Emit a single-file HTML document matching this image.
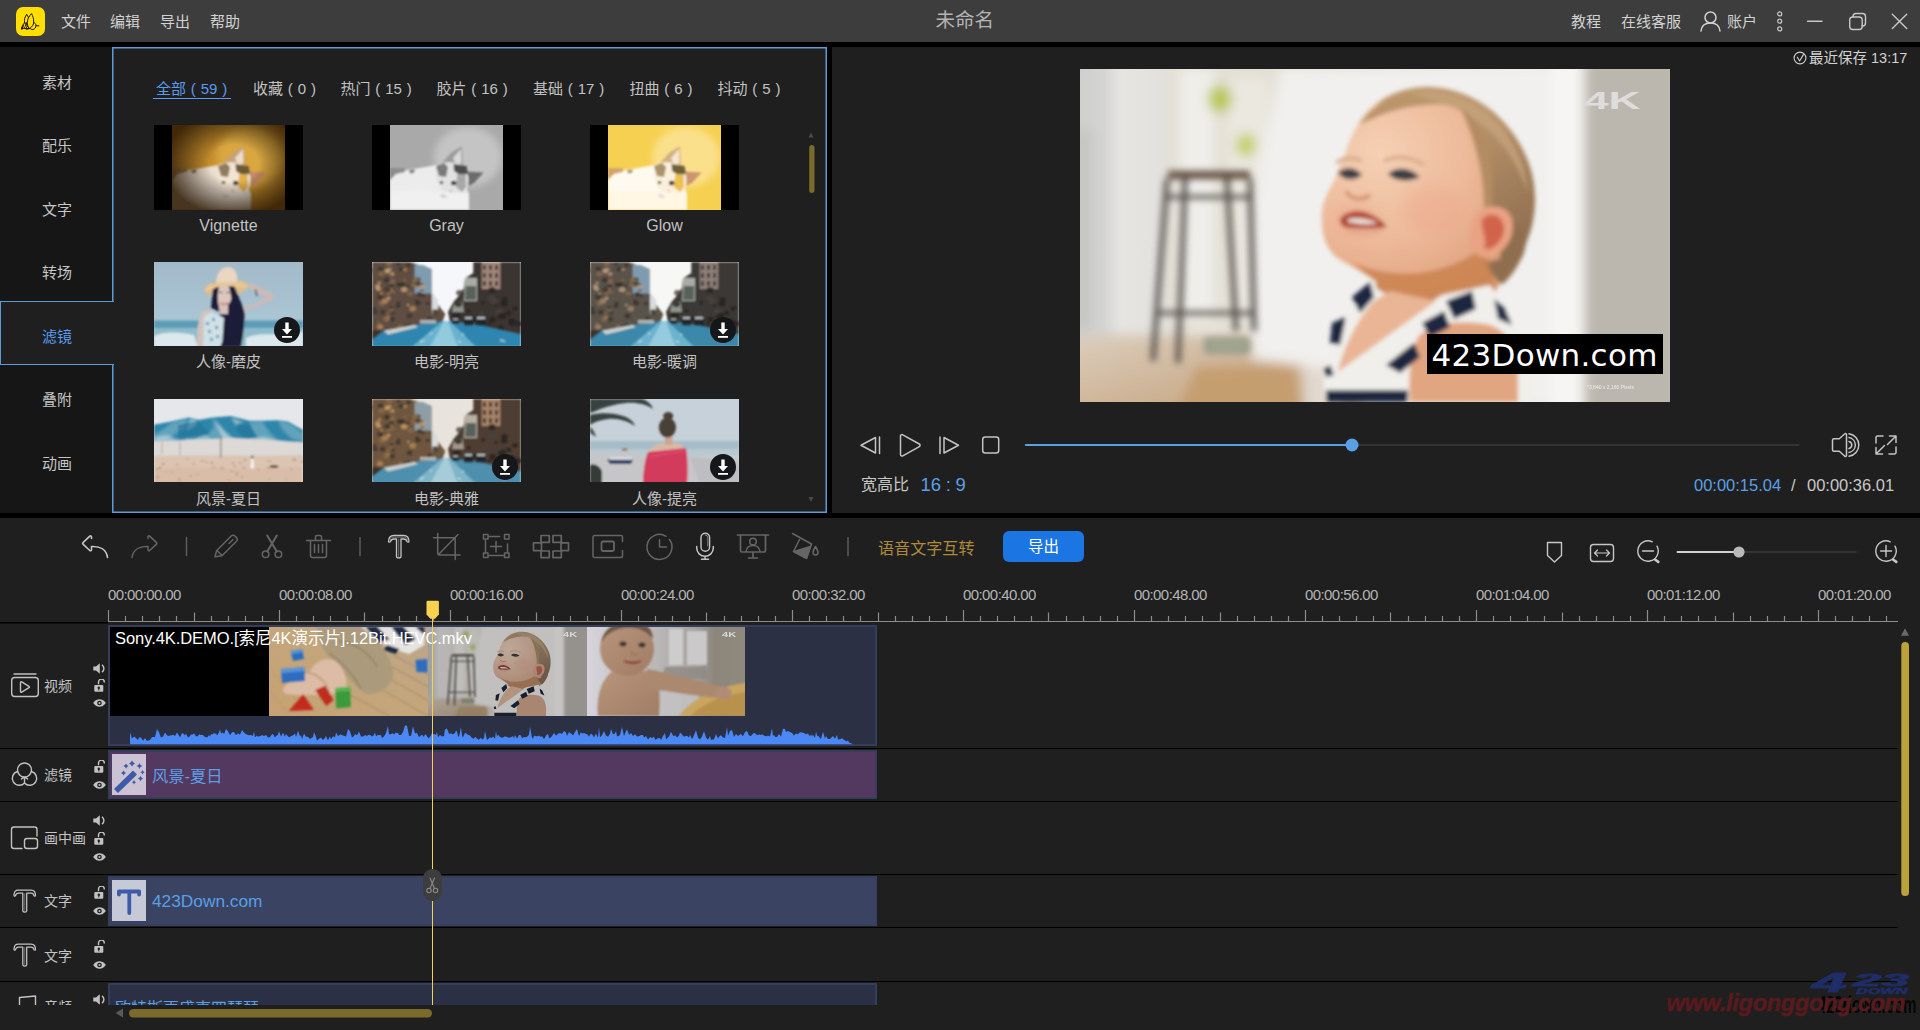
<!DOCTYPE html>
<html lang="zh-CN">
<head>
<meta charset="utf-8">
<title>未命名</title>
<style>
*{box-sizing:border-box;margin:0;padding:0}
html,body{width:1920px;height:1030px;overflow:hidden;background:#000}
body{font-family:"Liberation Sans","Noto Sans CJK SC",sans-serif;color:#c4c4c4;position:relative}
.abs{position:absolute}
.t{position:absolute;white-space:nowrap;line-height:1}
svg{position:absolute;overflow:visible}
#titlebar{position:absolute;left:0;top:0;width:1920px;height:42px;background:#3d3d3d}
#sidebar{position:absolute;left:0;top:47px;width:112px;height:466px;background:#161616}
#filters{position:absolute;left:112px;top:47px;width:715px;height:466px;background:#1f1f1f;box-shadow:inset 0 0 0 1.5px #5a9bd8}
#preview{position:absolute;left:832px;top:47px;width:1088px;height:466px;background:#1f1f1f}
#timeline{position:absolute;left:0;top:518px;width:1920px;height:512px;background:#1f1f1f;overflow:hidden}
.menu{font-size:15px;color:#d2d2d2;top:14px}
.side{font-size:15px;color:#c6c6c6;left:42px}
.tab{font-size:15px;color:#c2c2c2;top:81px;word-spacing:0.7px}
.thumb{position:absolute;width:149px;height:85px;overflow:hidden;background:#000}
.lbl{position:absolute;width:149px;text-align:center;font-size:15px;color:#c2c2c2;line-height:1;white-space:nowrap}
.dl{position:absolute;right:4px;bottom:4px;width:26px;height:26px;border-radius:50%;background:#16181b}
.rl{font-size:15px;letter-spacing:-0.58px;color:#b4b4b4;top:69px}
.hl{font-size:14px;color:#c4c4c4}
</style>
</head>
<body>
<div id="titlebar">
  <div class="abs" style="left:16px;top:7px;width:29px;height:29px;border-radius:7px;background:#ffde00"></div>
  <svg style="left:16px;top:7px" width="29" height="29" viewBox="0 0 29 29" fill="none" stroke="#1c1408" stroke-width="1" stroke-linecap="round" stroke-linejoin="round">
    <path d="M10.700 7.600C8.800 9.500 8 12.500 8.600 15.800M10.700 7.600C11.500 8.300 12.100 9.400 12.500 10.600M10.300 15.600C10.300 17.600 11.200 19.600 12.600 20.600"/>
    <path d="M15.500 6.800C13 8.800 11.300 12.500 11.300 15.500C11.300 17.500 11.800 19.300 12.600 20.600M15.500 6.800C17 8.800 17.800 12 17.700 15.300C17.600 17.600 16.300 19.600 14.500 20.800"/>
    <path d="M8.600 15.800C6.800 17.300 5.800 19.800 5.400 21.800C8 21 9.500 21.800 13.600 21.400M7.300 18.300C8 20 8.800 21.400 10.200 22.200C11.500 22.400 12.500 21.900 13.600 21.400M9.300 16.500C9.300 18.300 9.800 19.800 10.900 21"/>
    <path d="M17.700 15.500C19.300 16 20.200 17.300 20 18.800C19.800 20.600 18.800 22 17 22.500C15.800 22.700 14.700 22.300 14 21.300M20 18.700L22.900 18.800"/>
    <path d="M5.400 21.800L6.600 19.600L6.900 21.200Z" fill="#1c1408"/>
  </svg>
  <div class="t menu" style="left:61px">文件</div>
  <div class="t menu" style="left:110px">编辑</div>
  <div class="t menu" style="left:160px">导出</div>
  <div class="t menu" style="left:210px">帮助</div>
  <div class="t" style="left:935.500px;top:10.500px;font-size:19.500px;color:#b4b4b4">未命名</div>
  <div class="t menu" style="left:1571px">教程</div>
  <div class="t menu" style="left:1621px">在线客服</div>
  <svg style="left:1700px;top:10px" width="21" height="22" viewBox="0 0 21 22" fill="none" stroke="#d0d0d0" stroke-width="1.5" stroke-linecap="round">
    <circle cx="10.500" cy="7.500" r="5.500"/><path d="M1 21c.5-5 4-8 9.500-8s9 3 9.500 8"/>
  </svg>
  <div class="t menu" style="left:1727px">账户</div>
  <svg style="left:1775px;top:10px" width="10" height="22" viewBox="0 0 10 22" fill="none" stroke="#c8c8c8" stroke-width="1.200">
    <circle cx="4.700" cy="3.900" r="2"/><circle cx="4.700" cy="11.200" r="2"/><circle cx="4.700" cy="18.900" r="2"/>
  </svg>
  <svg style="left:1800px;top:8px" width="120" height="26" viewBox="0 0 120 26" fill="none" stroke="#c8c8c8" stroke-width="1.400" stroke-linecap="round">
    <path d="M7.500 13.300H22"/>
    <rect x="49.700" y="9" width="12.500" height="12.500" rx="3"/>
    <path d="M53 9V8.500a3 3 0 0 1 3-3h6.500a3 3 0 0 1 3 3V15a3 3 0 0 1-3 3H62"/>
    <path d="M92.300 6.200l14.400 14.400M106.700 6.200L92.300 20.600"/>
  </svg>
</div>
<div id="filters">
  <div class="t tab" style="left:44px;top:33.500px;color:#5b9bf0">全部 ( 59 )</div>
  <div class="abs" style="left:41px;top:50.500px;width:78px;height:1.500px;background:#5b9bf0"></div>
  <div class="t tab" style="left:141px;top:33.500px">收藏 ( 0 )</div>
  <div class="t tab" style="left:228.5px;top:33.500px">热门 ( 15 )</div>
  <div class="t tab" style="left:324.5px;top:33.500px">胶片 ( 16 )</div>
  <div class="t tab" style="left:421px;top:33.500px">基础 ( 17 )</div>
  <div class="t tab" style="left:517.5px;top:33.500px">扭曲 ( 6 )</div>
  <div class="t tab" style="left:605.5px;top:33.500px">抖动 ( 5 )</div>
  <!-- scrollbar -->
  <svg style="left:694px;top:83px" width="10" height="380" viewBox="0 0 10 380">
    <path d="M2.500 7.500L5 2.500L7.500 7.500Z" fill="#4a4a4a"/>
    <rect x="3.200" y="15" width="5.300" height="48" rx="2.650" fill="#7a6a2c"/>
    <path d="M2.500 367L5 372L7.500 367Z" fill="#4a4a4a"/>
  </svg>
  <!--THUMBS-->
</div>
<svg width="0" height="0" style="left:0;top:0">
  <defs>
    <filter id="b05" x="-5%" y="-5%" width="110%" height="110%"><feGaussianBlur stdDeviation="0.8"/></filter>
    <filter id="b1" x="-10%" y="-10%" width="120%" height="120%"><feGaussianBlur stdDeviation="1"/></filter>
    <filter id="b2" x="-10%" y="-10%" width="120%" height="120%"><feGaussianBlur stdDeviation="2"/></filter>
    <filter id="b3" x="-20%" y="-20%" width="140%" height="140%"><feGaussianBlur stdDeviation="3.5"/></filter>
    <filter id="b6" x="-20%" y="-20%" width="140%" height="140%"><feGaussianBlur stdDeviation="6"/></filter>
    <filter id="b10" x="-30%" y="-30%" width="160%" height="160%"><feGaussianBlur stdDeviation="10"/></filter>
    <radialGradient id="vig" cx="0.55" cy="0.45" r="0.62"><stop offset="0.35" stop-color="#000" stop-opacity="0"/><stop offset="1" stop-color="#2a1600" stop-opacity="0.85"/></radialGradient>
    <symbol id="cat" viewBox="0 0 113 85">
      <rect width="113" height="85" fill="var(--bg,#d9a23a)"/>
      <ellipse cx="78" cy="32" rx="34" ry="30" fill="var(--bg2,#e0b04a)" filter="url(#b3)"/>
      <g filter="url(#b1)">
        <path d="M0 44L16 45L30 43L46 40L60 44L70 52L76 62L79 69V85H0Z" fill="var(--fur,#efe6dc)"/>
        <path d="M0 43L15.700 43.500L15 47L6 49L0 55Z" fill="var(--back,#c8a070)"/>
        <path d="M19 45L25 44.500L24 48L20 48.500Z" fill="var(--patch,#8f7156)"/>
        <!-- ears -->
        <path d="M52.600 37L62 27L72 21.200L73 39L64 42Z" fill="var(--ear,#c4a27c)"/>
        <path d="M63 33L71 24L71.500 38L66 40Z" fill="var(--earin,#f0dcc8)"/>
        <path d="M73.800 46.600L93.600 47.500L84 58L77.500 61.300Z" fill="var(--ear2,#c48a68)"/>
        <!-- head -->
        <path d="M46 41C52 36 66 36 74 42C79 48 80 58 76 66C72 70 62 72 54 68C48 62 44 50 46 41Z" fill="var(--face,#f1e4d2)"/>
        <path d="M63.600 39L76.500 41L78 49L70 50L64 46Z" fill="var(--dark,#6a5a38)"/>
        <path d="M46 41L54 38L58 42L56 52L49 51Z" fill="var(--patch,#8f7c5e)"/>
        <path d="M67.300 48.400L75.600 50L76 62L72 67L66 62Z" fill="var(--patch2,#e3b04c)"/>
        <ellipse cx="63.700" cy="58" rx="2.800" ry="2.300" fill="#4a3a26"/>
        <ellipse cx="51.500" cy="57.500" rx="1.800" ry="1.500" fill="#5a4a36"/>
        <path d="M60 64.500L62.500 66.500L59.500 67.500Z" fill="var(--nose,#d8a090)"/>
        <path d="M0 68C20 64 55 66 79 69V85H0Z" fill="var(--fur2,#f3ece6)"/>
        <path d="M49.800 70C52 68 56 69 57 72C55 74 51 74 49.800 70Z" fill="var(--paw,#d9d2cc)"/>
      </g>
    </symbol>
    <symbol id="street" viewBox="0 0 149 85">
      <rect width="149" height="85" fill="var(--sky,#f6f7fa)"/>
      <g filter="url(#b05)">
        <!-- left side mass -->
        <path d="M0 0H38L59.400 7V31.400L63 38L68.700 46.300L73.300 52L70.500 60L0 76Z" fill="var(--tree,#5e4e42)"/>
        <path d="M42.600 3H51L59.400 7V31.400H42.600Z" fill="var(--bld,#7f9bae)"/>
        <path d="M60 30L66 38V50L60 52Z" fill="var(--bldL,#d9dcdc)"/>
        
        <ellipse cx="46.0" cy="41.1" rx="3.0" ry="2.4" fill="var(--t3,#3a322c)" opacity="0.8"/><ellipse cx="62.4" cy="48.8" rx="1.5" ry="1.2" fill="var(--t3,#3a322c)" opacity="0.8"/><ellipse cx="15.8" cy="51.2" rx="1.5" ry="1.2" fill="var(--t2,#8a6a4e)" opacity="0.8"/><ellipse cx="17.7" cy="7.5" rx="1.9" ry="1.5" fill="var(--t4,#c9a078)" opacity="0.8"/><ellipse cx="8.4" cy="6.7" rx="2.9" ry="2.3" fill="var(--t3,#3a322c)" opacity="0.8"/><ellipse cx="43.3" cy="18.4" rx="2.9" ry="2.3" fill="var(--t2,#8a6a4e)" opacity="0.8"/><ellipse cx="3.1" cy="50.3" rx="2.6" ry="2.1" fill="var(--t3,#3a322c)" opacity="0.8"/><ellipse cx="-1.9" cy="8.4" rx="3.1" ry="2.5" fill="var(--t2,#8a6a4e)" opacity="0.8"/><ellipse cx="66.5" cy="51.1" rx="1.7" ry="1.4" fill="var(--t2,#8a6a4e)" opacity="0.8"/><ellipse cx="45.9" cy="19.1" rx="2.5" ry="2.0" fill="var(--t2,#8a6a4e)" opacity="0.8"/><ellipse cx="9.8" cy="41.3" rx="3.3" ry="2.7" fill="var(--t2,#8a6a4e)" opacity="0.8"/><ellipse cx="52.5" cy="63.8" rx="2.0" ry="1.6" fill="var(--t3,#3a322c)" opacity="0.8"/><ellipse cx="49.9" cy="27.4" rx="1.9" ry="1.5" fill="var(--t3,#3a322c)" opacity="0.8"/><ellipse cx="28.4" cy="19.9" rx="1.4" ry="1.1" fill="var(--t2,#8a6a4e)" opacity="0.8"/><ellipse cx="2.5" cy="46.7" rx="2.1" ry="1.7" fill="var(--t3,#3a322c)" opacity="0.8"/><ellipse cx="16.4" cy="31.7" rx="2.4" ry="1.9" fill="var(--t2,#8a6a4e)" opacity="0.8"/><ellipse cx="9.5" cy="11.6" rx="3.3" ry="2.6" fill="var(--t2,#8a6a4e)" opacity="0.8"/><ellipse cx="19.4" cy="23.6" rx="2.5" ry="2.0" fill="var(--t3,#3a322c)" opacity="0.8"/><ellipse cx="28.8" cy="24.2" rx="1.4" ry="1.1" fill="var(--t1,#b98a5c)" opacity="0.8"/><ellipse cx="40.7" cy="46.7" rx="3.3" ry="2.6" fill="var(--t1,#b98a5c)" opacity="0.8"/><ellipse cx="63.6" cy="49.9" rx="3.3" ry="2.6" fill="var(--t3,#3a322c)" opacity="0.8"/><ellipse cx="51.4" cy="33.8" rx="1.9" ry="1.5" fill="var(--t3,#3a322c)" opacity="0.8"/><ellipse cx="29.3" cy="7.1" rx="3.0" ry="2.4" fill="var(--t3,#3a322c)" opacity="0.8"/><ellipse cx="19.7" cy="19.5" rx="3.4" ry="2.7" fill="var(--t2,#8a6a4e)" opacity="0.8"/><ellipse cx="29.8" cy="22.5" rx="3.2" ry="2.6" fill="var(--t3,#3a322c)" opacity="0.8"/><ellipse cx="32.6" cy="18.2" rx="1.6" ry="1.3" fill="var(--t2,#8a6a4e)" opacity="0.8"/><ellipse cx="7.1" cy="20.9" rx="1.6" ry="1.2" fill="var(--t2,#8a6a4e)" opacity="0.8"/><ellipse cx="19.4" cy="47.6" rx="2.4" ry="1.9" fill="var(--t2,#8a6a4e)" opacity="0.8"/><ellipse cx="36.6" cy="3.2" rx="2.5" ry="2.0" fill="var(--t3,#3a322c)" opacity="0.8"/><ellipse cx="26.4" cy="2.1" rx="2.1" ry="1.7" fill="var(--t3,#3a322c)" opacity="0.8"/><ellipse cx="22.1" cy="30.1" rx="1.5" ry="1.2" fill="var(--t2,#8a6a4e)" opacity="0.8"/><ellipse cx="17.0" cy="2.2" rx="3.1" ry="2.5" fill="var(--t2,#8a6a4e)" opacity="0.8"/><ellipse cx="32.4" cy="64.8" rx="1.7" ry="1.3" fill="var(--t3,#3a322c)" opacity="0.8"/><ellipse cx="7.3" cy="27.3" rx="2.1" ry="1.7" fill="var(--t1,#b98a5c)" opacity="0.8"/><ellipse cx="16.0" cy="55.8" rx="2.3" ry="1.8" fill="var(--t4,#c9a078)" opacity="0.8"/><ellipse cx="57.5" cy="56.2" rx="2.3" ry="1.8" fill="var(--t3,#3a322c)" opacity="0.8"/><ellipse cx="19.5" cy="45.5" rx="1.9" ry="1.6" fill="var(--t3,#3a322c)" opacity="0.8"/><ellipse cx="6.0" cy="26.7" rx="2.2" ry="1.7" fill="var(--t4,#c9a078)" opacity="0.8"/><ellipse cx="36.2" cy="63.3" rx="2.4" ry="1.9" fill="var(--t3,#3a322c)" opacity="0.8"/><ellipse cx="20.1" cy="11.9" rx="2.4" ry="1.9" fill="var(--t4,#c9a078)" opacity="0.8"/><ellipse cx="20.0" cy="57.2" rx="3.0" ry="2.4" fill="var(--t3,#3a322c)" opacity="0.8"/><ellipse cx="29.0" cy="23.5" rx="1.5" ry="1.2" fill="var(--t3,#3a322c)" opacity="0.8"/><ellipse cx="35.4" cy="24.0" rx="2.0" ry="1.6" fill="var(--t3,#3a322c)" opacity="0.8"/><ellipse cx="45.8" cy="17.5" rx="2.8" ry="2.3" fill="var(--t3,#3a322c)" opacity="0.8"/><ellipse cx="36.2" cy="42.9" rx="1.4" ry="1.1" fill="var(--t4,#c9a078)" opacity="0.8"/><ellipse cx="21.3" cy="51.1" rx="1.9" ry="1.6" fill="var(--t3,#3a322c)" opacity="0.8"/><ellipse cx="37.5" cy="53.9" rx="3.0" ry="2.4" fill="var(--t3,#3a322c)" opacity="0.8"/><ellipse cx="15.0" cy="18.1" rx="3.3" ry="2.6" fill="var(--t3,#3a322c)" opacity="0.8"/><ellipse cx="42.3" cy="23.1" rx="3.1" ry="2.5" fill="var(--t2,#8a6a4e)" opacity="0.8"/><ellipse cx="18.8" cy="29.7" rx="2.1" ry="1.7" fill="var(--t2,#8a6a4e)" opacity="0.8"/><ellipse cx="8.1" cy="34.9" rx="3.1" ry="2.5" fill="var(--t3,#3a322c)" opacity="0.8"/><ellipse cx="38.2" cy="31.5" rx="2.8" ry="2.3" fill="var(--t2,#8a6a4e)" opacity="0.8"/><ellipse cx="32.2" cy="27.5" rx="3.3" ry="2.6" fill="var(--t4,#c9a078)" opacity="0.8"/><ellipse cx="26.0" cy="43.9" rx="2.6" ry="2.1" fill="var(--t3,#3a322c)" opacity="0.8"/><ellipse cx="14.5" cy="57.2" rx="3.4" ry="2.7" fill="var(--t2,#8a6a4e)" opacity="0.8"/><ellipse cx="17.5" cy="10.6" rx="2.7" ry="2.2" fill="var(--t2,#8a6a4e)" opacity="0.8"/><ellipse cx="10.8" cy="50.1" rx="2.8" ry="2.3" fill="var(--t3,#3a322c)" opacity="0.8"/><ellipse cx="8.1" cy="64.7" rx="3.2" ry="2.5" fill="var(--t1,#b98a5c)" opacity="0.8"/><ellipse cx="7.3" cy="20.9" rx="1.8" ry="1.4" fill="var(--t1,#b98a5c)" opacity="0.8"/><ellipse cx="17.5" cy="27.4" rx="2.7" ry="2.2" fill="var(--t1,#b98a5c)" opacity="0.8"/><ellipse cx="13.0" cy="39.0" rx="3.2" ry="2.6" fill="var(--t1,#b98a5c)" opacity="0.8"/><ellipse cx="48.1" cy="23.1" rx="3.1" ry="2.5" fill="var(--t3,#3a322c)" opacity="0.8"/><ellipse cx="33.0" cy="7.6" rx="2.1" ry="1.7" fill="var(--t1,#b98a5c)" opacity="0.8"/><ellipse cx="16.5" cy="36.3" rx="2.0" ry="1.6" fill="var(--t4,#c9a078)" opacity="0.8"/><ellipse cx="28.3" cy="22.4" rx="3.3" ry="2.7" fill="var(--t3,#3a322c)" opacity="0.8"/><ellipse cx="15.5" cy="8.5" rx="2.5" ry="2.0" fill="var(--t4,#c9a078)" opacity="0.8"/><ellipse cx="5.6" cy="24.4" rx="2.6" ry="2.1" fill="var(--t4,#c9a078)" opacity="0.8"/><ellipse cx="9.6" cy="31.5" rx="1.7" ry="1.3" fill="var(--t1,#b98a5c)" opacity="0.8"/><ellipse cx="45.0" cy="23.2" rx="1.4" ry="1.1" fill="var(--t1,#b98a5c)" opacity="0.8"/><ellipse cx="45.2" cy="21.5" rx="2.5" ry="2.0" fill="var(--t3,#3a322c)" opacity="0.8"/><ellipse cx="55.9" cy="41.5" rx="2.2" ry="1.7" fill="var(--t3,#3a322c)" opacity="0.8"/><ellipse cx="28.1" cy="64.5" rx="2.4" ry="1.9" fill="var(--t2,#8a6a4e)" opacity="0.8"/><ellipse cx="49.8" cy="25.1" rx="3.2" ry="2.6" fill="var(--t4,#c9a078)" opacity="0.8"/><ellipse cx="45.0" cy="39.2" rx="2.0" ry="1.6" fill="var(--t3,#3a322c)" opacity="0.8"/><ellipse cx="15.7" cy="27.4" rx="3.4" ry="2.7" fill="var(--t3,#3a322c)" opacity="0.8"/><ellipse cx="6.7" cy="61.3" rx="1.4" ry="1.2" fill="var(--t2,#8a6a4e)" opacity="0.8"/><ellipse cx="26.7" cy="41.0" rx="2.0" ry="1.6" fill="var(--t3,#3a322c)" opacity="0.8"/><ellipse cx="14.9" cy="9.0" rx="2.4" ry="1.9" fill="var(--t4,#c9a078)" opacity="0.8"/><ellipse cx="44.0" cy="18.1" rx="3.0" ry="2.4" fill="var(--t2,#8a6a4e)" opacity="0.8"/><ellipse cx="47.6" cy="32.3" rx="2.8" ry="2.3" fill="var(--t3,#3a322c)" opacity="0.8"/>
        <!-- right side mass -->
        <path d="M101.300 0H149V74L78 60L76 50L81.700 39.800L87.300 33.300L92 25.800L93 16.500L101.300 11Z" fill="var(--bldR,#3b3431)"/>
        <path d="M109.700 0H128.300V27H109.700Z" fill="var(--bldR2,#a3877b)"/>
        <path d="M111 3h3v5h-3zM117 3h3v5h-3zM123 3h3v5h-3zM111 11h3v5h-3zM117 11h3v5h-3zM123 11h3v5h-3zM111 19h3v5h-3zM117 19h3v5h-3zM123 19h3v5h-3z" fill="var(--win,#4a3e3a)"/>
        <path d="M93 16H105V39H92Z" fill="var(--bldR3,#a9aca6)"/>
        <path d="M94 24H104V38H93Z" fill="var(--bldR4,#59605b)"/>
        <path d="M82 42L90 36L92 50H80Z" fill="var(--bldR3,#a9aca6)" opacity="0.800"/>
        
        <ellipse cx="123.1" cy="39.1" rx="3.2" ry="2.5" fill="var(--t6,#4a413b)" opacity="0.8"/><ellipse cx="140.9" cy="60.8" rx="4.2" ry="3.4" fill="var(--t5,#262321)" opacity="0.8"/><ellipse cx="101.5" cy="56.9" rx="3.3" ry="2.7" fill="var(--t5,#262321)" opacity="0.8"/><ellipse cx="130.9" cy="51.3" rx="2.1" ry="1.7" fill="var(--t5,#262321)" opacity="0.8"/><ellipse cx="132.1" cy="41.7" rx="3.5" ry="2.8" fill="var(--t5,#262321)" opacity="0.8"/><ellipse cx="120.0" cy="28.1" rx="3.7" ry="3.0" fill="var(--t5,#262321)" opacity="0.8"/><ellipse cx="117.9" cy="61.7" rx="2.0" ry="1.6" fill="var(--t5,#262321)" opacity="0.8"/><ellipse cx="128.1" cy="50.6" rx="4.4" ry="3.5" fill="var(--t6,#4a413b)" opacity="0.8"/><ellipse cx="143.1" cy="46.3" rx="3.0" ry="2.4" fill="var(--t5,#262321)" opacity="0.8"/><ellipse cx="130.0" cy="53.9" rx="4.2" ry="3.4" fill="var(--t5,#262321)" opacity="0.8"/><ellipse cx="85.3" cy="59.5" rx="4.1" ry="3.3" fill="var(--t6,#4a413b)" opacity="0.8"/><ellipse cx="120.6" cy="57.6" rx="3.6" ry="2.9" fill="var(--t5,#262321)" opacity="0.8"/><ellipse cx="90.3" cy="62.6" rx="3.2" ry="2.6" fill="var(--t6,#4a413b)" opacity="0.8"/><ellipse cx="147.1" cy="61.8" rx="3.3" ry="2.7" fill="var(--t5,#262321)" opacity="0.8"/><ellipse cx="136.3" cy="50.3" rx="2.2" ry="1.7" fill="var(--t5,#262321)" opacity="0.8"/><ellipse cx="88.6" cy="38.2" rx="2.2" ry="1.7" fill="var(--t5,#262321)" opacity="0.8"/><ellipse cx="111.2" cy="40.7" rx="2.2" ry="1.7" fill="var(--t5,#262321)" opacity="0.8"/><ellipse cx="84.6" cy="54.6" rx="4.1" ry="3.3" fill="var(--t5,#262321)" opacity="0.8"/><ellipse cx="137.2" cy="51.4" rx="2.3" ry="1.8" fill="var(--t5,#262321)" opacity="0.8"/><ellipse cx="128.8" cy="65.8" rx="3.1" ry="2.5" fill="var(--t5,#262321)" opacity="0.8"/><ellipse cx="109.5" cy="51.2" rx="2.4" ry="1.9" fill="var(--t6,#4a413b)" opacity="0.8"/><ellipse cx="119.7" cy="36.1" rx="3.7" ry="2.9" fill="var(--t6,#4a413b)" opacity="0.8"/><ellipse cx="87.5" cy="30.7" rx="3.4" ry="2.8" fill="var(--t6,#4a413b)" opacity="0.8"/><ellipse cx="124.0" cy="43.1" rx="2.0" ry="1.6" fill="var(--t5,#262321)" opacity="0.8"/><ellipse cx="122.5" cy="40.0" rx="3.2" ry="2.6" fill="var(--t6,#4a413b)" opacity="0.8"/><ellipse cx="86.3" cy="42.2" rx="3.7" ry="3.0" fill="var(--t5,#262321)" opacity="0.8"/><ellipse cx="127.4" cy="49.6" rx="2.7" ry="2.2" fill="var(--t6,#4a413b)" opacity="0.8"/><ellipse cx="96.7" cy="48.9" rx="2.2" ry="1.7" fill="var(--t5,#262321)" opacity="0.8"/><ellipse cx="132.5" cy="37.7" rx="3.3" ry="2.6" fill="var(--t5,#262321)" opacity="0.8"/><ellipse cx="139.7" cy="58.7" rx="3.1" ry="2.5" fill="var(--t5,#262321)" opacity="0.8"/>
        <!-- road -->
        <path d="M0 85V75L11.800 68.700L42.600 63L70.500 59.400H78L106 63L149 72.400V85Z" fill="var(--road,#2f86b0)"/>
        <path d="M40 85L70 59.400H78L104 85Z" fill="var(--road2,#7cc0d8)" opacity="0.750"/>
        <path d="M58 85L72 59.400H76L86 85Z" fill="var(--road3,#a5d6e6)" opacity="0.700"/>
        <path d="M11.800 68.700L42.600 63L46 65L16 72.500Z" fill="var(--walk,#cfd0cc)"/>
        <path d="M0 68L11.800 68.700L0 78Z" fill="var(--t3,#3a322c)"/>
        <!-- cars -->
        <path d="M80 57.500h7v4.500h-7zM92 56h9v7.500h-9zM104 56h10v7.500h-10z" fill="#24272c"/>
        <path d="M81 56.600h5v1.500h-5zM93 55h7v2h-7zM105 55h8v2h-8z" fill="#b9c0c6"/>
        <path d="M48 58h16v3.500h-16z" fill="#c5cacc" opacity="0.800"/>
        <path d="M48 80l4-1.500M86 79l3 1.500M128 78l5 1.500M58 72l2-1M90 72l2 1" stroke="#e6f2f6" stroke-width="1" fill="none"/>
      </g>
    </symbol>
    <symbol id="dlico" viewBox="0 0 26 26">
      <circle cx="13" cy="13" r="13" fill="#15171a"/>
      <path d="M11.300 5.500h3.400v6.500h3.300L13 17.500L8 12h3.300Z" fill="#fff"/>
      <rect x="8" y="19" width="10" height="1.800" fill="#fff"/>
    </symbol>
  </defs>
</svg>
<div id="thumbs" class="abs" style="left:112px;top:47px;width:715px;height:466px;overflow:hidden">
  <!-- row 1 : cats -->
  <div class="thumb" style="left:42px;top:78px;height:84.500px">
    <svg style="left:18px;top:0" width="113" height="85"><use href="#cat" width="113" height="85" style="--bg:#c48c2c;--bg2:#d9a640;--fur:#ecdfd0;--fur2:#f1e6da;--back:#a8804c"/><rect width="113" height="85" fill="url(#vig)"/></svg>
  </div>
  <div class="lbl" style="left:42px;top:171px;font-size:16px">Vignette</div>
  <div class="thumb" style="left:260px;top:78px;height:84.500px">
    <svg style="left:18px;top:0;filter:grayscale(1)" width="113" height="85"><use href="#cat" width="113" height="85" style="--bg:#a9a9a9;--bg2:#c4c4c4;--fur:#ececec;--fur2:#f0f0f0;--face:#e2e2e2;--patch:#7a7a7a;--patch2:#a8a8a8;--ear:#9c9c9c;--earin:#d8d8d8;--ear2:#6c6c6c;--dark:#4e4e4e;--back:#8c8c8c;--nose:#b0b0b0"/></svg>
  </div>
  <div class="lbl" style="left:260px;top:171px;font-size:16px">Gray</div>
  <div class="thumb" style="left:478px;top:78px;height:84.500px">
    <svg style="left:18px;top:0" width="113" height="85"><use href="#cat" width="113" height="85" style="--bg:#f6d050;--bg2:#fbe08c;--fur:#fffaf0;--fur2:#fff6e4;--face:#fbf0dc;--patch:#a89468;--patch2:#ecc050;--ear:#d4b080;--earin:#f6e6d0;--ear2:#cc9470;--dark:#6e5e38;--back:#d0a468;--nose:#e8b8a0;--paw:#e6dfd6"/></svg>
  </div>
  <div class="lbl" style="left:478px;top:171px;font-size:16px">Glow</div>
  <!-- row 2 -->
  <div class="thumb" style="left:42px;top:215px;height:84px;background:#a9c0cf">
    <svg style="left:0;top:0" width="149" height="85" viewBox="0 0 149 85">
      <defs><linearGradient id="sky1" x1="0" x2="0" y1="0" y2="1"><stop offset="0" stop-color="#a2bac9"/><stop offset="0.680" stop-color="#aac5d3"/></linearGradient></defs>
      <rect width="149" height="85" fill="url(#sky1)"/>
      <g filter="url(#b05)">
      <rect y="58.500" width="149" height="11" fill="#5d9cb6"/>
      <rect y="66" width="149" height="19" fill="#8fbccc"/>
      <path d="M0 74C10 69 26 70 40 73L44 85H0ZM92 76C104 70 120 74 149 70V85H92Z" fill="#dbe8ed"/>
      <!-- raised arm -->
      <path d="M89 50C100 46 116 40 122 35C116 30 104 24 96 20L93 25C100 29 108 33 112 36C106 40 96 44 88 46Z" fill="#cbbab8"/>
      <ellipse cx="72" cy="26" rx="22" ry="8.500" fill="#dcbc8a" transform="rotate(-6 72 26)"/>
      <!-- hair back -->
      <path d="M60 21C58 30 58 40 57 46L66 50L64 85H87C90 70 91 56 90 48C86 38 82 28 79 21Z" fill="#1b1b38"/>
      <!-- left shoulder/arm -->
      <path d="M43 85C43 70 44 56 48 50C52 47 58 48 60 50L58 85Z" fill="#d2c2be"/>
      <!-- dress -->
      <path d="M50 54L58 50L70 56L68 85H49Z" fill="#cfe0e6"/>
      <path d="M52 60h3v3h-3zM58 56h3v3h-3zM54 68h3v3h-3zM61 64h3v3h-3zM56 76h3v3h-3zM62 73h3v3h-3z" fill="#6f9fc0"/>
      <!-- neck & face -->
      <path d="M64 40H74V52L66 52Z" fill="#d6c2bc"/>
      <ellipse cx="70" cy="32" rx="8.500" ry="11.500" fill="#dcc6be"/>
      <path d="M66.500 41C68.500 43 72 43 74 41C72 42 68.500 42 66.500 41Z" stroke="#c07870" stroke-width="1.200" fill="#f0e6e0"/>
      <path d="M64.500 30.500h4M72 30.500h4" stroke="#5a4a50" stroke-width="1"/>
      <!-- hair front right -->
      <path d="M76 22C82 30 86 42 86 54C84 66 78 78 74 85H66C72 72 78 58 78 46C78 36 76 28 74 22Z" fill="#1b1b38"/>
      <path d="M62 22C60 30 60 38 61 44L64 40C63 34 64 28 66 22Z" fill="#1b1b38"/>
      <!-- hat -->
      <path d="M62 22C62 10 68 5 74 5C80 5 84 10 83 20C76 24 68 24 62 22Z" fill="#ead6c2"/>
      <path d="M50.500 28C52 23 60 20.500 70 20C82 19 92 20 94 24C92 27 86 26 80 24.500C74 23.500 66 24 62 25.500C58 27.500 54 30 50.500 28Z" fill="#e6c796"/>
      <path d="M101.500 27.500L103 34" stroke="#5a5a78" stroke-width="1.600"/>
      </g>
    </svg>
    <svg style="left:120px;top:55px" width="26" height="26"><use href="#dlico" width="26" height="26"/></svg>
  </div>
  <div class="lbl" style="left:42px;top:307px">人像-磨皮</div>
  <div class="thumb" style="left:260px;top:215px;height:84px">
    <svg style="left:0;top:0" width="149" height="85"><use href="#street" width="149" height="85"/></svg>
  </div>
  <div class="lbl" style="left:260px;top:307px">电影-明亮</div>
  <div class="thumb" style="left:478px;top:215px;height:84px">
    <svg style="left:0;top:0" width="149" height="85"><use href="#street" width="149" height="85" style="--tree:#5a524a;--t1:#a48a6c;--t4:#b9a084;--bldR:#3a3836;--bldR2:#8f8078;--road:#3a88aa;--sky:#f7f7f5"/></svg>
    <svg style="left:120px;top:55px" width="26" height="26"><use href="#dlico" width="26" height="26"/></svg>
  </div>
  <div class="lbl" style="left:478px;top:307px">电影-暖调</div>
  <!-- row 3 -->
  <div class="thumb" style="left:42px;top:352px;height:83px">
    <svg style="left:0;top:0" width="149" height="85" viewBox="0 0 149 85">
      <rect width="149" height="85" fill="#e5e7ea"/>
      <g filter="url(#b05)">
      <path d="M0 25.800L17 22.600L34.600 18.400L45.600 20.700L58.500 18.400L77 17L95.400 21.700L108.300 21.700L123 21.200L134 22.600L149 30.900V44L77 40L0 43Z" fill="#2f87aa"/>
      <path d="M17 24L34 19L30 30L12 40L4 42L0 36L10 30ZM58.500 19L68 30L80 42L62 42L52 38L60 28ZM96 23L108 22L116 34L124 42L104 42L98 32ZM124 22L134 23.500L149 34V43L138 40L128 30Z" fill="#8dbacb" opacity="0.550" filter="url(#b1)"/>
      <path d="M36 20L44 21L40 28L32 32ZM60 20L72 34L84 43L70 42ZM77 18L90 24L82 26ZM0 38L14 36L26 42L0 44ZM30 40L52 36L60 43L34 44ZM88 40L110 38L130 43L92 44Z" fill="#d9e3e8" opacity="0.600" filter="url(#b1)"/>
      <path d="M24 26L44 22L56 34L40 40L24 38ZM84 24L96 26L104 38L92 40L82 32Z" fill="#1f7197" opacity="0.600"/>
      <path d="M0 42.500C30 41 60 40 77 39C100 40 130 42 149 43.500V60H0Z" fill="#dcd9d7"/>
      <path d="M0 57C40 55 100 58 149 56V85H0Z" fill="#dcc4b2"/>
      <path d="M0 70C40 66 100 72 149 68V85H0Z" fill="#d9bba4" opacity="0.700"/>
      <ellipse cx="69.0" cy="68.6" rx="1.0" ry="1.0" fill="#94705e" opacity="0.35"/><ellipse cx="74.9" cy="80.7" rx="0.9" ry="0.8" fill="#94705e" opacity="0.63"/><ellipse cx="6.1" cy="68.7" rx="1.8" ry="0.8" fill="#94705e" opacity="0.68"/><ellipse cx="23.4" cy="65.5" rx="1.0" ry="0.8" fill="#94705e" opacity="0.77"/><ellipse cx="88.0" cy="77.8" rx="1.3" ry="0.9" fill="#94705e" opacity="0.40"/><ellipse cx="43.4" cy="75.5" rx="1.8" ry="0.8" fill="#94705e" opacity="0.39"/><ellipse cx="39.7" cy="64.8" rx="1.2" ry="1.0" fill="#94705e" opacity="0.44"/><ellipse cx="132.1" cy="80.2" rx="0.9" ry="0.7" fill="#94705e" opacity="0.57"/><ellipse cx="3.5" cy="69.8" rx="2.1" ry="0.6" fill="#94705e" opacity="0.62"/><ellipse cx="18.1" cy="73.3" rx="2.1" ry="0.6" fill="#94705e" opacity="0.35"/><ellipse cx="12.4" cy="72.4" rx="0.8" ry="0.6" fill="#94705e" opacity="0.57"/><ellipse cx="137.2" cy="69.7" rx="1.4" ry="0.9" fill="#94705e" opacity="0.39"/><ellipse cx="86.4" cy="64.0" rx="1.7" ry="1.1" fill="#94705e" opacity="0.37"/><ellipse cx="82.7" cy="73.9" rx="1.0" ry="0.7" fill="#94705e" opacity="0.80"/><ellipse cx="148.7" cy="62.8" rx="1.8" ry="1.1" fill="#94705e" opacity="0.46"/><ellipse cx="91.1" cy="61.0" rx="1.3" ry="0.9" fill="#94705e" opacity="0.62"/><ellipse cx="115.4" cy="62.0" rx="1.3" ry="1.0" fill="#94705e" opacity="0.61"/><ellipse cx="67.2" cy="69.2" rx="2.2" ry="0.8" fill="#94705e" opacity="0.36"/><ellipse cx="119.1" cy="67.6" rx="1.4" ry="0.6" fill="#94705e" opacity="0.55"/><ellipse cx="48.4" cy="62.0" rx="1.7" ry="0.6" fill="#94705e" opacity="0.70"/><ellipse cx="3.8" cy="78.0" rx="1.9" ry="0.8" fill="#94705e" opacity="0.67"/><ellipse cx="37.0" cy="77.0" rx="1.4" ry="0.6" fill="#94705e" opacity="0.78"/><ellipse cx="59.7" cy="68.6" rx="2.0" ry="0.7" fill="#94705e" opacity="0.65"/><ellipse cx="25.5" cy="79.4" rx="1.2" ry="0.5" fill="#94705e" opacity="0.79"/><ellipse cx="25.7" cy="81.8" rx="2.2" ry="0.9" fill="#94705e" opacity="0.36"/><ellipse cx="9.1" cy="64.8" rx="1.3" ry="0.9" fill="#94705e" opacity="0.78"/><ellipse cx="52.8" cy="63.2" rx="1.6" ry="0.6" fill="#94705e" opacity="0.39"/><ellipse cx="82.8" cy="76.0" rx="0.9" ry="0.8" fill="#94705e" opacity="0.67"/><ellipse cx="113.9" cy="68.8" rx="2.0" ry="0.6" fill="#94705e" opacity="0.67"/><ellipse cx="115.0" cy="80.2" rx="1.5" ry="0.6" fill="#94705e" opacity="0.37"/><ellipse cx="78.8" cy="64.0" rx="1.7" ry="0.6" fill="#94705e" opacity="0.70"/><ellipse cx="33.1" cy="60.3" rx="1.0" ry="0.8" fill="#94705e" opacity="0.60"/><ellipse cx="57.9" cy="64.0" rx="1.5" ry="1.1" fill="#94705e" opacity="0.59"/><ellipse cx="140.3" cy="60.7" rx="2.2" ry="1.0" fill="#94705e" opacity="0.59"/><ellipse cx="78.0" cy="72.4" rx="2.1" ry="0.5" fill="#94705e" opacity="0.64"/><ellipse cx="80.8" cy="66.9" rx="1.8" ry="0.9" fill="#94705e" opacity="0.40"/><ellipse cx="104.2" cy="70.4" rx="1.5" ry="0.9" fill="#94705e" opacity="0.37"/><ellipse cx="89.8" cy="68.6" rx="2.0" ry="0.6" fill="#94705e" opacity="0.72"/>
      <path d="M66.800 38V58.500" stroke="#8c7868" stroke-width="1.200"/>
      <path d="M8 43V55M26 43V56" stroke="#a89c90" stroke-width="0.800"/>
      <path d="M97.300 59.500H99.300L100 69.500H96.600Z" fill="#f6f6f4"/>
      <circle cx="98.200" cy="58" r="1.200" fill="#3a2c28"/>
      <ellipse cx="120" cy="67.500" rx="4.500" ry="1.600" fill="#4a3830" opacity="0.850"/>
      </g>
    </svg>
  </div>
  <div class="lbl" style="left:42px;top:444px">风景-夏日</div>
  <div class="thumb" style="left:260px;top:352px;height:83px">
    <svg style="left:0;top:0" width="149" height="85"><use href="#street" width="149" height="85" style="--sky:#e8e3dc;--tree:#6e573f;--t1:#b88a54;--t4:#c79c68;--t2:#8c6a46;--bldR:#4e3d33;--bldR2:#a88468;--road:#4f8fae;--road2:#8fc0d2;--road3:#b6d6df;--bld:#8f9ea6;--bldR3:#b8b0a2"/></svg>
    <svg style="left:120px;top:55px" width="26" height="26"><use href="#dlico" width="26" height="26"/></svg>
  </div>
  <div class="lbl" style="left:260px;top:444px">电影-典雅</div>
  <div class="thumb" style="left:478px;top:352px;height:83px">
    <svg style="left:0;top:0" width="149" height="85" viewBox="0 0 149 85">
      <rect width="149" height="85" fill="#c7d1d9"/>
      <g filter="url(#b05)">
      <rect y="42" width="149" height="14" fill="#a6bcc8"/>
      <rect y="50" width="149" height="7" fill="#b9c9d0"/>
      <path d="M0 55C40 54 100 57 149 60V85H0Z" fill="#c6c6c8"/>
      <path d="M100 58C120 60 140 62 149 66V85H110Z" fill="#b8babd" opacity="0.700"/>
      <!-- palms -->
      <path d="M0 0H52C58 2 62 6 63 10C56 5 46 3 36 4C26 5 14 8 6 12L0 14Z" fill="#39433f"/>
      <path d="M0 16C12 13 26 14 36 18C42 21 44 24 45 27C38 22 28 19 18 20C10 21 4 23 0 26Z" fill="#39433f"/>
      <path d="M0 28C3 30 5 34 6 38L3 36L0 34Z" fill="#46504a"/>
      <path d="M0 66C4 64 9 66 12 72V85H0Z" fill="#343a36"/>
      <!-- boat -->
      <path d="M17 60.500H43L41 65H20Z" fill="#2c3f66"/>
      <path d="M20 58.500H42V60.500H20Z" fill="#e6e8ea"/>
      <ellipse cx="34.600" cy="50.500" rx="3" ry="1.600" fill="#a8785c"/>
      <!-- woman -->
      <path d="M58.500 54C60 48 66 45 75 44H83C89 44 93 46 94 50L92 56H60Z" fill="#d9b9a5"/>
      <path d="M75 36H82.500V46H75Z" fill="#c9a690"/>
      <ellipse cx="77.400" cy="28.500" rx="8.600" ry="10" fill="#4a4039"/>
      <ellipse cx="78.200" cy="17" rx="5" ry="4" fill="#4a4039"/>
      <path d="M53 85C53 72 55 60 58 53L96 49C98 60 98 74 97 85Z" fill="#d33b5b"/>
      <path d="M60 58C66 56 80 54 94 52" stroke="#e0506c" stroke-width="1.500" fill="none"/>
      </g>
    </svg>
    <svg style="left:120px;top:55px" width="26" height="26"><use href="#dlico" width="26" height="26"/></svg>
  </div>
  <div class="lbl" style="left:478px;top:444px">人像-提亮</div>
</div>
<svg width="0" height="0" style="left:0;top:0"><defs><symbol id="babyscene" viewBox="0 0 590 333">
      <defs>
        <linearGradient id="bgL" x1="0" x2="1" y1="0" y2="0">
          <stop offset="0" stop-color="#cfcfcd"/><stop offset="0.04" stop-color="#d4d4d2"/><stop offset="0.07" stop-color="#e6e5e2"/><stop offset="0.16" stop-color="#e2e0dc"/><stop offset="0.2" stop-color="#eeedea"/><stop offset="0.28" stop-color="#e6e2da"/><stop offset="0.4" stop-color="#e2ded4"/><stop offset="0.6" stop-color="#e8e6e2"/><stop offset="1" stop-color="#f1f0ee"/>
        </linearGradient>
        <linearGradient id="floor" x1="0" x2="1" y1="0" y2="1">
          <stop offset="0" stop-color="#dccfc0"/><stop offset="0.5" stop-color="#cdb294"/><stop offset="1" stop-color="#bd9468"/>
        </linearGradient>
        <radialGradient id="skin" gradientUnits="userSpaceOnUse" cx="300" cy="84" r="190"><stop offset="0" stop-color="#f5d0b4"/><stop offset="0.450" stop-color="#edba9a"/><stop offset="0.800" stop-color="#e0a27e"/><stop offset="1" stop-color="#d08e66"/></radialGradient>
        <linearGradient id="hairg" x1="0" x2="0.600" y1="0" y2="1"><stop offset="0" stop-color="#caa980"/><stop offset="0.500" stop-color="#b48e66"/><stop offset="1" stop-color="#8e6e50"/></linearGradient>
      </defs>
      <rect width="590" height="333" fill="url(#bgL)"/>
      <!-- background room -->
      <g filter="url(#b6)">
        <rect x="88" y="-10" width="110" height="270" fill="#e3dfd4"/>
        <rect x="100" y="0" width="34" height="250" fill="#efeeea"/>
        <rect x="148" y="10" width="40" height="240" fill="#ebe8e0"/>
        <ellipse cx="140" cy="30" rx="12" ry="14" fill="#b9c752"/>
        <ellipse cx="166" cy="76" rx="10" ry="12" fill="#c3cf62"/>
        <rect x="-10" y="60" width="22" height="200" fill="#c6c6c4"/>
        <rect x="-20" y="266" width="300" height="90" fill="url(#floor)"/>
        <path d="M116 298L214 295L218 345H96Z" fill="#c59e70"/><path d="M222 296L262 298L262 345H224Z" fill="#e2d8ce"/>
        <path d="M200 0C190 60 172 120 172 200V290L250 300L330 333H600V0Z" fill="#f1f0ee"/>
        <rect x="501" y="-10" width="100" height="360" fill="#bcb7ae"/>
        <rect x="470" y="-10" width="34" height="360" fill="#f6f5f3"/>
      </g>
      <g filter="url(#b3)" fill="none" stroke="#4e4844" stroke-width="6">
        <path d="M88 106H170" stroke="#5d4a3a" stroke-width="8"/>
        <path d="M87 110L73 292M105 110L98 294M147 110L156 262M170 110L174 262" stroke-width="5"/>
        <path d="M86 128H172M78 244H172" stroke-width="4"/>
        <path d="M126 270H168V283H126Z" fill="#a2a88e" stroke="#7e8682" stroke-width="2.5"/>
      </g>
      <!-- baby -->
      <g filter="url(#b2)">
        <!-- hair mass -->
        <path d="M276 60C286 36 316 16 352 18C394 20 432 50 448 92C458 118 457 148 447 172C441 190 431 204 423 215L394 204L380 110L300 50Z" fill="url(#hairg)"/>
        <path d="M430 150C446 160 450 176 440 192C434 204 428 210 423 215L400 200Z" fill="#8f6e50"/>
        <path d="M300 34C330 16 372 18 400 40C380 34 350 34 320 44Z" fill="#c7a378"/>
        <!-- face -->
        <path d="M294 36C310 27 350 25 384 40C397 56 405 78 407 100C408 116 409 128 411 138L422 150L420 190L402 194L420 214L404 242L296 242L296 212C286 206 276 200 266 194C258 190 250 184 246 174C243 166 241 156 242 142C243 130 250 120 256 108C258 100 262 94 266 82C272 62 284 44 294 36Z" fill="url(#skin)"/>
        <!-- chin / neck shadow -->
        <path d="M270 192C292 204 330 210 366 198C384 192 396 184 404 176L414 214L404 240L296 240L296 212Z" fill="#c9834f" opacity="0.850"/>
        <path d="M296 226L350 238L404 228L404 244L296 244Z" fill="#dfa37c"/>
        <!-- top hair over forehead -->
        <path d="M280 56C290 38 312 22 346 20C372 20 396 30 412 48C396 40 372 34 346 36C320 38 298 46 280 56Z" fill="#bb956a"/>
        <path d="M330 24C360 18 396 30 420 56C436 76 446 100 448 124C440 100 424 72 400 54C380 40 356 32 330 24Z" fill="#c6a47c" opacity="0.800"/>
        <!-- temple hair -->
        <path d="M380 38C398 50 410 76 412 104C413 120 412 130 413 140L404 138C404 116 400 80 380 38Z" fill="#b48c62"/>
        <ellipse cx="276" cy="150" rx="22" ry="15" fill="#ea9a84" opacity="0.350" filter="url(#b6)"/>
        <ellipse cx="352" cy="140" rx="30" ry="24" fill="#ee9c84" opacity="0.280" filter="url(#b6)"/>
        <!-- ear -->
        <path d="M392 152C398 134 426 132 432 150C436 168 424 186 408 188C394 190 388 176 390 164Z" fill="#e9a384"/>
        <path d="M402 150C412 140 426 148 424 162C422 174 412 182 404 180C408 170 400 160 402 150Z" fill="#d2644c"/>
        <!-- eyes, brows -->
        <path d="M258 104C264 97 276 98 282 106C275 112 264 112 258 104Z" fill="#3d3c44"/>
        <path d="M308 105C316 97 330 98 340 108C329 113 316 113 308 105Z" fill="#3d3c44"/>
        <path d="M256 94C264 88 274 88 282 92M304 92C316 86 332 88 344 96" stroke="#d2a382" stroke-width="3" fill="none"/>
        <!-- nose -->
        <path d="M266 122C270 130 282 132 290 126" stroke="#cf8a68" stroke-width="3.500" fill="none"/>
        <!-- mouth -->
        <path d="M260 150C266 141 282 140 292 146C300 150 304 154 307 158C296 160 276 160 264 158C261 156 260 153 260 150Z" fill="#b1402e"/>
        <path d="M268 150C276 148 290 150 298 154C290 156 276 155 268 153Z" fill="#efe6de"/>
        <path d="M266 161C276 166 292 166 302 161" stroke="#e3a58a" stroke-width="3" fill="none"/>
        <!-- body: shirt -->
        <path d="M289 213L300 222L340 240L362 226L410 216L432 250L452 300V333H245L243 306C252 280 270 240 289 213Z" fill="#f1efeb"/>
        <!-- chest skin in neckline -->
        <path d="M294 232L310 222L356 232L262 300L258 303C262 282 276 252 294 232Z" fill="#e9b595"/>
        <!-- arm skin -->
        <path d="M338 268C350 254 380 250 410 256C428 262 436 280 438 300V333H330C328 310 330 286 338 268Z" fill="#e2a582"/>
        <!-- stripes -->
        <path d="M272 228L290 213L294 228L280 244ZM252 254L266 248L260 276L250 274ZM366 232L392 222L396 240L374 250ZM342 254L364 242L370 258L350 268ZM414 230L424 238L432 256L418 250ZM306 296L334 274L340 288L320 304ZM246 321H328V333H246ZM244 300L250 296L254 306L246 308Z" fill="#1c2740"/>
      </g>
      </symbol></defs></svg>
<div id="sidebar">
  <div class="t side" style="top:28px">素材</div>
  <div class="t side" style="top:91px">配乐</div>
  <div class="t side" style="top:155px">文字</div>
  <div class="t side" style="top:218px">转场</div>
  <div class="abs" style="left:0;top:253.500px;width:114px;height:64.500px;background:#1f1f1f;border:1.500px solid #5a9bd8;border-right:none"></div>
  <div class="t side" style="top:282px;color:#5b9bf0">滤镜</div>
  <div class="t side" style="top:345px">叠附</div>
  <div class="t side" style="top:409px">动画</div>
</div>
<div id="preview">
  <!-- saved -->
  <svg style="left:961px;top:4px" width="14" height="14" viewBox="0 0 14 14" fill="none" stroke="#d0d0d0" stroke-width="1.1" stroke-linecap="round" stroke-linejoin="round"><circle cx="7" cy="7" r="5.900"/><path d="M4.300 6.200L6.600 10L10.400 3.600"/></svg>
  <div class="t" style="left:977px;top:3.500px;font-size:14.500px;color:#d2d2d2">最近保存 13:17</div>
  <!-- video frame -->
  <div class="abs" id="frame" style="left:248px;top:22px;width:590px;height:333px;overflow:hidden;background:#e6e4e0">
    <svg style="left:0;top:0" width="590" height="333" viewBox="0 0 590 333"><use href="#babyscene" width="590" height="333"/>
<!-- 4K logo -->
      <text x="504" y="40" font-family="'Liberation Sans',sans-serif" font-weight="bold" font-size="23.400" fill="#dedddc" textLength="56.600" lengthAdjust="spacingAndGlyphs">4K</text>
      <text x="507" y="320" font-family="'Liberation Sans',sans-serif" font-size="5" fill="#f4f4f4" opacity="0.900">*3,840 x 2,160 Pixels</text>
    </svg>
    <div class="abs" style="left:347px;top:264.700px;width:236px;height:40.800px;background:#000"></div>
    <div class="t" style="left:351.500px;top:268px;font-family:'DejaVu Sans','Liberation Sans',sans-serif;font-size:31px;letter-spacing:0.280px;color:#fff;line-height:36px">423Down.com</div>
  </div>
  <!-- controls -->
  <svg style="left:0;top:380px" width="1088" height="40" viewBox="832 427 1088 40" fill="none" stroke="#c4c4c4" stroke-width="1.5" stroke-linejoin="round" stroke-linecap="round">
    <path d="M875.500 437.500v15.500l-14.500-7.750Z"/><path d="M879.500 437v16.500"/>
    <path d="M900.500 436.500v18a1.500 1.500 0 0 0 2.300 1.300l16.500-9.200a1.500 1.500 0 0 0 0-2.600l-16.500-9.200a1.500 1.500 0 0 0 -2.300 1.700Z"/>
    <path d="M944 437.500v15.500l14.500-7.750Z"/><path d="M940 437v16.500"/>
    <rect x="982.700" y="437" width="16" height="16" rx="2.500"/>
    <!-- progress -->
    <path d="M1352 445H1799" stroke="#3d3d3d" stroke-width="1.500"/>
    <path d="M1025.800 445H1352" stroke="#5b9fe6" stroke-width="2"/>
    <circle cx="1352" cy="445" r="6.500" fill="#5b9fe6" stroke="none"/>
    <!-- volume -->
    <path d="M1846.500 434.500v21a1 1 0 0 1 -1.700 .700l-5.500-5h-5.300a1.500 1.500 0 0 1 -1.500-1.500v-9.400a1.500 1.500 0 0 1 1.500-1.500h5.300l5.500-5a1 1 0 0 1 1.700 .700Z"/>
    <path d="M1849 441.500a3.600 3.600 0 0 1 0 7"/><path d="M1849 437.600a7.500 7.500 0 0 1 0 14.800"/><path d="M1849 433.800a11.300 11.300 0 0 1 0 22.400"/>
    <!-- fullscreen -->
    <path d="M1883 436h-5.500a1.500 1.500 0 0 0 -1.500 1.500v5.500M1896 447v5.500a1.500 1.500 0 0 1 -1.500 1.500h-5.500M1889.500 436h6.500v6.500M1896 436l-8.500 8.500M1882.500 454h-6.500v-6.500M1876 454l8.500-8.500"/>
  </svg>
  <div class="t" style="left:29px;top:430px;font-size:16px;color:#c8c8c8">宽高比</div>
  <div class="t" style="left:88.500px;top:429px;font-size:18.500px;color:#5b9fe6;word-spacing:-0.500px">16 : 9</div>
  <div class="t" style="left:862px;top:430px;font-size:16.500px;color:#5b9fe6">00:00:15.04</div>
  <div class="t" style="left:959px;top:430px;font-size:16.500px;color:#c8c8c8">/</div>
  <div class="t" style="left:975px;top:430px;font-size:16.500px;color:#c8c8c8">00:00:36.01</div>
</div>
<div id="timeline">
  <svg style="left:0;top:0" width="1920" height="70" viewBox="0 518 1920 70" fill="none" stroke="#656565" stroke-width="1.5" stroke-linecap="round" stroke-linejoin="round">
    <!-- undo -->
    <g stroke="#c6c6c6" stroke-width="1.600">
      <path d="M91.500 538.500V536.800a1 1 0 0 0 -1.700-.700L83 542.600a1 1 0 0 0 0 1.500L89.800 550.500a1 1 0 0 0 1.700-.700V546.500C100.500 546 106.500 550 107.500 557.500"/>
    </g>
    <!-- redo -->
    <path d="M148 538.500V536.800a1 1 0 0 1 1.700-.700L156.500 542.600a1 1 0 0 1 0 1.500L149.700 550.500a1 1 0 0 1 -1.700-.700V546.500C139 546 133 550 132 557.500"/>
    <path d="M186.500 537.500V555.500M360 537.500V555.500M848 537.500V555.500" stroke="#5c5c5c"/>
    <!-- pencil -->
    <path d="M215 556.800l1.700-6.300L231.200 536a2.600 2.600 0 0 1 3.700 0l1.600 1.600a2.600 2.600 0 0 1 0 3.700L222 555.800Z"/>
    <path d="M217 550.500l4.700 4.700M229 543.500l4-4"/>
    <!-- scissors -->
    <path d="M267.200 535.500L276.800 551.500M276.800 535.500L267.200 551.500" stroke-width="2"/>
    <circle cx="265.600" cy="554.300" r="3.300"/><circle cx="278.400" cy="554.300" r="3.300"/>
    <!-- trash -->
    <path d="M306.500 540.500H330.500M315.500 540v-3a1.500 1.500 0 0 1 1.500-1.500h3a1.500 1.500 0 0 1 1.500 1.500v3M310.500 541v14.500a2 2 0 0 0 2 2h12a2 2 0 0 0 2-2V541M314.500 544.500v8M318.500 544.500v8M322.500 544.500v8"/>
    <!-- T -->
    <g stroke="#c4c4c4" stroke-width="1.300">
      <path d="M388.500 541.500C388.500 536.500 391 535.500 394 535.500H403.500C406.500 535.500 409 536.500 409 541.500C409 542.300 407.300 542.300 407 541.500C406.500 539.500 405.500 539 403.500 539H401V556.500C401 558.300 396.500 558.300 396.500 556.500V539H394C392 539 391 539.500 390.500 541.500C390.200 542.300 388.500 542.300 388.500 541.500Z"/>
      <path d="M390 540C390.500 537.500 392 537.200 394 537.200H403.500C405.500 537.200 407 537.500 407.500 540M398.700 539V556.500" stroke-width="0.800" opacity="0.600"/>
    </g>
    <!-- crop -->
    <path d="M437.700 533.500V553.500a1.500 1.500 0 0 0 1.500 1.500H460M433.500 537.800H455.200V559.500M439 554L458 534.500"/>
    <!-- select box -->
    <path d="M488.500 536.500H499.500M485.500 540V552.500M488.500 555.500H504.500M507.500 544V552.500M490.500 546.500H501.500M496 541.500V552"/>
    <rect x="483.500" y="534.500" width="4.500" height="4.500"/><rect x="504.500" y="534.500" width="4.500" height="4.500"/><rect x="483.500" y="553" width="4.500" height="4.500"/><rect x="504.500" y="553" width="4.500" height="4.500"/>
    <!-- mosaic -->
    <path d="M541 535.500h8.300v6.800h-8.300zM553 535.500h8.300v6.800h-8.300zM533.500 542.800h8v7.800h-8zM561 542.800h7.500v7.800h-7.500zM541 551h8.300v6.600h-8.300zM553 551h8.300v6.600h-8.300z" stroke-width="1.700"/>
    <!-- freeze frame -->
    <path d="M622.500 541.500V537a1.500 1.500 0 0 0 -1.500-1.500H594.500a1.500 1.500 0 0 0 -1.500 1.500v19a1.500 1.500 0 0 0 1.500 1.500H621a1.500 1.500 0 0 0 1.500-1.500v-5.500"/>
    <rect x="601.500" y="541.500" width="12.500" height="9.500" rx="1.500" stroke-width="1.800"/>
    <!-- clock -->
    <path d="M666 536.300A12.500 12.500 0 1 0 669.500 539.500M659.500 539.500v7.500h7"/>
    <!-- mic -->
    <g stroke="#c4c4c4">
      <path d="M701 537.500a4.300 4.300 0 0 1 8.600 0v9.500a4.300 4.300 0 0 1 -8.600 0Z" stroke-width="1.400"/>
      <path d="M705.300 535a2.500 2.500 0 0 1 2.500 2.500v8.500" stroke-width="0.900" opacity="0.700"/>
      <path d="M696.700 546.500v1.500a8.300 8.300 0 0 0 16.600 0v-1.500M705 556.500v2.700M701.500 559.300h7"/>
    </g>
    <!-- screen person -->
    <path d="M737.500 535H768.500M740.500 535.500v15a1.500 1.500 0 0 0 1.500 1.500h22a1.500 1.500 0 0 0 1.500-1.500v-15M753 552.500v5M748.500 558h9" stroke-width="1.700"/>
    <circle cx="753" cy="541.500" r="3.300"/><path d="M746 551.500c.5-4 3.500-6 7-6s6.500 2 7 6"/>
    <!-- bucket -->
    <path d="M792.500 533.500L811.500 544"/>
    <path d="M799.500 539.500L793.500 551.500L806.500 558.500L811.500 544"/>
    <path d="M794 551.500L810.500 546.500L806.500 558Z" fill="#656565"/>
    <path d="M815.500 546.500c1.500 2.500 2.500 4.500 2.500 6a2.500 2.500 0 0 1 -5 0c0-1.500 1-3.500 2.500-6Z"/>
    <!-- right tools -->
    <g stroke="#c6c6c6" stroke-width="1.400">
      <path d="M1547.500 542.500H1561.500V555.500L1554.500 562L1547.500 555.500Z"/>
      <rect x="1590.500" y="544.500" width="23" height="17" rx="3"/>
      <path d="M1594.500 553H1609.500M1597.500 550L1594.500 553L1597.500 556M1606.500 550L1609.500 553L1606.500 556" stroke-width="1.200"/>
      <path d="M1657 546.200A10.200 10.200 0 1 1 1652.300 541.760M1642.500 551H1653.500"/>
      <path d="M1655 559.500L1658.300 561.900" stroke-width="2.600"/>
      <path d="M1895 546.200A10.200 10.200 0 1 1 1890.300 541.760M1880.500 551H1891.500M1886 545.500V556.500"/>
      <path d="M1893 559.500L1896.300 561.900" stroke-width="2.600"/>
      <path d="M1739 552H1856" stroke="#3d3d3d" stroke-width="1.500"/>
      <path d="M1677.500 552H1739" stroke="#d0d0d0" stroke-width="2"/>
      <circle cx="1739" cy="552" r="5.600" fill="#b9b9b9" stroke="none"/>
    </g>
  </svg>
  <div class="t" style="left:878px;top:21.800px;font-size:16.100px;color:#ae8b3b">语音文字互转</div>
  <div class="abs" style="left:1003px;top:13px;width:81px;height:31px;border-radius:6px;background:#1b75e2"></div>
  <div class="t" style="left:1028px;top:21px;font-size:15.500px;color:#fff">导出</div>
  <div class="t rl" style="left:108px">00:00:00.00</div>
  <div class="t rl" style="left:279px">00:00:08.00</div>
  <div class="t rl" style="left:450px">00:00:16.00</div>
  <div class="t rl" style="left:621px">00:00:24.00</div>
  <div class="t rl" style="left:792px">00:00:32.00</div>
  <div class="t rl" style="left:963px">00:00:40.00</div>
  <div class="t rl" style="left:1134px">00:00:48.00</div>
  <div class="t rl" style="left:1305px">00:00:56.00</div>
  <div class="t rl" style="left:1476px">00:01:04.00</div>
  <div class="t rl" style="left:1647px">00:01:12.00</div>
  <div class="t rl" style="left:1818px">00:01:20.00</div>
  <svg style="left:0;top:80px" width="1920" height="30" viewBox="0 598 1920 30" fill="none"><path d="M108.5 610V621M125.5 616V621M142.5 616V621M159.5 616V621M176.5 616V621M194.5 612.5V621M211.5 616V621M228.5 616V621M245.5 616V621M262.5 616V621M279.5 610V621M296.5 616V621M313.5 616V621M330.5 616V621M347.5 616V621M364.5 612.5V621M382.5 616V621M399.5 616V621M416.5 616V621M433.5 616V621M450.5 610V621M467.5 616V621M484.5 616V621M501.5 616V621M518.5 616V621M536.5 612.5V621M553.5 616V621M570.5 616V621M587.5 616V621M604.5 616V621M621.5 610V621M638.5 616V621M655.5 616V621M672.5 616V621M689.5 616V621M706.5 612.5V621M724.5 616V621M741.5 616V621M758.5 616V621M775.5 616V621M792.5 610V621M809.5 616V621M826.5 616V621M843.5 616V621M860.5 616V621M878.5 612.5V621M895.5 616V621M912.5 616V621M929.5 616V621M946.5 616V621M963.5 610V621M980.5 616V621M997.5 616V621M1014.5 616V621M1031.5 616V621M1048.5 612.5V621M1066.5 616V621M1083.5 616V621M1100.5 616V621M1117.5 616V621M1134.5 610V621M1151.5 616V621M1168.5 616V621M1185.5 616V621M1202.5 616V621M1220.5 612.5V621M1237.5 616V621M1254.5 616V621M1271.5 616V621M1288.5 616V621M1305.5 610V621M1322.5 616V621M1339.5 616V621M1356.5 616V621M1373.5 616V621M1390.5 612.5V621M1408.5 616V621M1425.5 616V621M1442.5 616V621M1459.5 616V621M1476.5 610V621M1493.5 616V621M1510.5 616V621M1527.5 616V621M1544.5 616V621M1562.5 612.5V621M1579.5 616V621M1596.5 616V621M1613.5 616V621M1630.5 616V621M1647.5 610V621M1664.5 616V621M1681.5 616V621M1698.5 616V621M1715.5 616V621M1733.5 612.5V621M1750.5 616V621M1767.5 616V621M1784.5 616V621M1801.5 616V621M1818.5 610V621M1835.5 616V621M1852.5 616V621M1869.5 616V621M1886.5 616V621" stroke="#8c8c8c" stroke-width="1.2"/><path d="M108 621.500H1898" stroke="#8c8c8c" stroke-width="1.200"/><path d="M0 622.700H108" stroke="#000" stroke-width="1.400"/></svg>
  <div class="abs" style="left:0;top:-518px;width:1920px;height:1548px">
    <svg width="0" height="0" style="left:0;top:0"><defs>
      <symbol id="spk" viewBox="0 0 13 11"><path d="M0.300 3.500H3L6.800 0.300V10.700L3 7.500H0.300Z" fill="#c2c2c2"/><path d="M9 1.800a4.600 4.600 0 0 1 0 7.400" fill="none" stroke="#c2c2c2" stroke-width="1.500"/></symbol>
      <symbol id="lck" viewBox="0 0 11 13"><rect x="0.300" y="6" width="9" height="6.700" rx="1" fill="#c2c2c2"/><path d="M2.300 6V3.800a2.900 2.900 0 0 1 5.800 0V4.300" fill="none" stroke="#c2c2c2" stroke-width="1.400" transform="translate(2.200 -0.800)"/><circle cx="4.800" cy="8.700" r="1.200" fill="#1f1f1f"/><rect x="4.300" y="9" width="1" height="2.400" fill="#1f1f1f"/></symbol>
      <symbol id="eye" viewBox="0 0 13 8"><path d="M0.200 4C2.200 1 4.300 0.300 6.500 0.300S10.800 1 12.800 4C10.800 7 8.700 7.700 6.500 7.700S2.200 7 0.200 4Z" fill="#c2c2c2"/><circle cx="6.500" cy="4" r="2.300" fill="#1f1f1f"/><circle cx="6.500" cy="4" r="1" fill="#c2c2c2"/></symbol>
      <symbol id="ticon" viewBox="0 0 24 24"><path d="M1 6.500C1 2.500 2.500 1 5.500 1H18.500C21.500 1 23 2.500 23 6.500C23 7.300 21.600 7.300 21.400 6.500C21 4.500 20 4 18.500 4H14V22C14 23.800 10 23.800 10 22V4H5.500C4 4 3 4.500 2.600 6.500C2.400 7.300 1 7.300 1 6.500Z" fill="none" stroke="#c2c2c2" stroke-width="1.300" stroke-linejoin="round"/><path d="M12 4V22" stroke="#c2c2c2" stroke-width="0.800" opacity="0.600"/></symbol>
    </defs></svg>
    <!-- separators -->
    <div class="abs" style="left:0;top:747.800px;width:1898px;height:1.300px;background:#000"></div>
    <div class="abs" style="left:0;top:800.800px;width:1898px;height:1.300px;background:#000"></div>
    <div class="abs" style="left:0;top:873.800px;width:1898px;height:1.300px;background:#000"></div>
    <div class="abs" style="left:0;top:926.700px;width:1898px;height:1.300px;background:#000"></div>
    <div class="abs" style="left:0;top:980.700px;width:1898px;height:1.300px;background:#000"></div>
    <!-- video clip -->
    <div class="abs" style="left:108px;top:624.500px;width:769px;height:121.500px;background:#2b3044;border:2.500px solid #343d5a"></div>
    <div class="abs" id="vthumbs" style="left:110px;top:627px;width:635px;height:89px;background:#000;overflow:hidden">
      <svg style="left:158.500px;top:0" width="159.500" height="89" viewBox="0 0 159 89" preserveAspectRatio="none">
        <defs><linearGradient id="wood" x1="0" x2="1" y1="1" y2="0"><stop offset="0" stop-color="#c6a272"/><stop offset="0.550" stop-color="#c4a67c"/><stop offset="1" stop-color="#b9a68c"/></linearGradient></defs>
        <rect width="159" height="89" fill="url(#wood)"/>
        <g filter="url(#b05)">
          <path d="M100 40L159 74M112 34L159 60M124 28L159 47M90 50L159 89M70 62L120 89" stroke="#8a7458" stroke-width="0.900" opacity="0.600" fill="none"/>
          <path d="M0 40L40 89M0 62L20 89" stroke="#b08c5e" stroke-width="0.800" opacity="0.500" fill="none"/>
          <path d="M89 0H155V18L140 27C126 24 106 14 89 0Z" fill="#e6e4e2"/>
          <path d="M96 0H108L120 12L110 16ZM122 0H134L146 12L136 18ZM146 0H155V8ZM118 18L130 22L126 27L114 23Z" fill="#1f2a44"/>
          <path d="M48 0H92C108 12 124 30 124 48C122 60 110 68 96 67C84 58 70 40 58 28C52 20 48 10 48 0Z" fill="#ab9b7b"/>
          <path d="M70 14C86 16 100 26 108 40M60 26C72 34 84 48 92 62" stroke="#8e7e60" stroke-width="1.300" fill="none"/>
          <path d="M14 62C18 54 30 50 40 46C44 36 54 30 64 33C74 38 80 52 76 64C66 68 48 68 30 68C20 68 12 67 14 62Z" fill="#dcbca4"/>
          <path d="M40 46C50 48 58 56 60 66" stroke="#c0977c" stroke-width="1.400" fill="none"/>
          <path d="M21.500 24L33 22L35 32L24 34ZM12 42L35 40L36 54L13 56ZM146 33L158 32V45.500L147 45Z" fill="#2d6cc0"/>
          <path d="M21.500 24L33 22L34 25L22.500 27ZM12 42L35 40L35.500 44L12.500 46Z" fill="#5a94dc"/>
          <path d="M19.800 84L34 67L44.700 83Z" fill="#c32b1a"/>
          <path d="M46 63L56 58.800L64.500 73L57 79Z" fill="#bf2e1c"/>
          <path d="M66 61L81 59.800L81.600 80L67 81.600Z" fill="#3a9a3a"/>
          <path d="M66 61L81 59.800L81.200 64L66.300 65Z" fill="#58b452"/>
        </g>
      </svg>
      <svg style="left:318px;top:0;filter:brightness(0.800) saturate(0.720)" width="159" height="89" viewBox="0 0 590 333" preserveAspectRatio="none"><use href="#babyscene" width="590" height="333"/></svg>
      <div class="t" style="left:453px;top:5px;font-size:6.500px;font-weight:bold;color:#d8d8d8;transform:scaleX(1.700);transform-origin:0 0">4K</div>
      <svg style="left:476.500px;top:0" width="159" height="89" viewBox="0 0 159 89" preserveAspectRatio="none">
        <defs><linearGradient id="bg4" x1="0" x2="1" y1="0" y2="0"><stop offset="0" stop-color="#d6d4da"/><stop offset="0.120" stop-color="#cfcdd2"/><stop offset="0.450" stop-color="#b9b6b6"/><stop offset="0.700" stop-color="#a39e98"/><stop offset="0.800" stop-color="#8c867b"/><stop offset="1" stop-color="#8f897e"/></linearGradient>
        <linearGradient id="sk4" x1="0" x2="1" y1="0" y2="1"><stop offset="0" stop-color="#b8957c"/><stop offset="1" stop-color="#a07c64"/></linearGradient></defs>
        <rect width="159" height="89" fill="url(#bg4)"/>
        <g filter="url(#b1)">
          <rect x="82" y="2" width="14" height="36" fill="#d2d0d2" opacity="0.900"/>
          <rect x="100" y="4" width="20" height="34" fill="#cfcdcf" opacity="0.900"/>
          <path d="M78 40H118L122 52H74Z" fill="#8e8a86" opacity="0.800"/>
          <rect x="72" y="62" width="40" height="27" fill="#c6c4c6" opacity="0.800"/>
          <path d="M92 89C104 72 128 60 159 56V89Z" fill="#c9a55e"/>
          <path d="M104 89C116 76 136 68 159 65V89Z" fill="#b8924e"/>
          <path d="M11 89C9 70 14 52 26 44H62C72 48 74 62 72 89Z" fill="url(#sk4)"/>
          <path d="M60 42C84 46 116 56 138 60C148 62 146 72 136 71C112 70 82 64 62 62Z" fill="#ab8870"/>
          <path d="M130 60C138 58 146 62 144 70C140 74 132 72 128 68Z" fill="#b08c74"/>
          <ellipse cx="40" cy="22" rx="27" ry="27" fill="url(#sk4)"/>
          <path d="M14 16C16 2 28 -6 44 -6C58 -6 66 2 66 12C58 2 46 -1 36 1C26 3 18 8 14 16Z" fill="#6e5846"/>
          <ellipse cx="36" cy="17" rx="3.500" ry="2.400" fill="#3a3030"/><ellipse cx="55" cy="18" rx="3.500" ry="2.400" fill="#3a3030"/>
          <path d="M37 34C43 36 49 36 54 34C49 37 43 37 37 34Z" fill="#8e3a30" stroke="#8e3a30" stroke-width="1.800"/>
          <path d="M44 24C45 28 48 29 50 27" stroke="#96705a" stroke-width="1.200" fill="none"/>
        </g>
      </svg>
      <div class="t" style="left:612px;top:5px;font-size:6.500px;font-weight:bold;color:#d8d8d8;transform:scaleX(1.700);transform-origin:0 0">4K</div>
</div>
    <svg style="left:0;top:720px" width="900" height="26" viewBox="0 720 900 26"><path d="M130 744.300L130 732.3L132 738.6L134 736.6L136 738.0L137 738.9L138 740.0L139 737.6L141 737.5L143 740.8L145 738.0L147 740.9L148 740.4L150 740.1L152 736.9L153 737.0L155 737.0L157 729.1L159 732.2L161 737.5L163 736.8L165 732.5L167 735.2L168 736.0L170 735.6L172 735.3L173 734.7L175 736.0L177 732.5L178 734.0L180 737.3L182 733.3L183 733.3L185 735.5L186 733.6L188 737.6L190 735.9L191 734.3L192 734.7L194 733.6L196 736.3L198 736.2L199 734.3L201 735.0L203 735.0L205 737.0L207 737.6L209 735.0L210 736.7L211 734.0L213 734.4L214 732.3L215 734.3L216 733.2L217 735.5L219 732.4L220 729.3L221 733.6L223 732.6L224 734.2L226 729.1L228 731.3L230 735.3L232 732.3L234 732.1L236 735.3L238 733.3L240 734.8L242 730.1L244 732.5L246 734.2L247 734.4L249 735.3L251 735.0L253 735.9L254 731.3L255 737.2L257 735.4L258 736.9L259 736.0L260 736.2L262 734.9L264 736.1L266 735.0L268 737.6L270 736.9L272 734.2L273 734.0L275 737.6L276 735.9L278 734.7L279 731.0L281 736.4L283 732.8L285 736.7L286 733.8L287 735.2L289 737.2L291 736.2L293 735.3L295 733.4L296 737.1L298 730.8L300 736.6L301 735.1L302 739.2L304 733.6L306 736.8L308 736.8L310 739.0L311 738.3L313 736.9L314 732.2L316 736.7L317 740.8L319 738.7L321 737.4L323 740.1L325 737.8L326 735.7L327 738.7L328 740.0L330 736.3L331 739.2L333 736.3L335 737.2L336 732.4L338 735.9L339 735.4L340 734.6L341 734.4L342 735.3L344 735.8L346 736.4L348 729.0L350 731.2L352 737.5L354 736.1L355 734.0L357 735.2L359 731.7L361 736.4L363 736.4L365 734.9L367 735.9L368 735.1L370 734.7L372 736.3L373 736.2L375 732.6L376 736.4L377 735.2L379 734.9L381 735.3L382 738.0L384 736.4L386 733.1L388 725.9L389 734.6L391 734.0L393 733.2L394 734.4L396 732.4L397 733.2L398 732.4L399 735.0L401 735.1L403 731.9L405 725.5L407 725.7L409 735.7L411 735.9L413 726.3L415 733.6L417 732.8L419 737.2L420 735.9L422 734.8L424 736.9L425 734.2L426 734.7L428 737.8L429 738.2L431 735.2L432 732.7L433 734.5L434 733.7L436 735.1L437 731.8L438 737.2L440 734.9L442 736.4L444 736.0L445 729.2L447 728.4L449 733.8L451 733.5L453 734.2L455 733.1L456 730.4L457 731.6L458 736.1L459 737.1L461 726.9L462 735.2L463 737.5L465 732.8L467 734.1L468 734.7L470 735.4L472 738.1L474 738.7L475 736.7L477 738.4L479 739.7L481 737.6L482 739.6L484 738.3L485 731.1L487 740.0L489 738.3L490 737.2L492 737.9L493 736.4L495 738.8L496 730.9L497 736.9L498 734.6L500 737.0L502 737.8L504 736.9L505 736.2L507 737.0L509 737.7L511 737.2L513 735.9L514 738.5L515 735.1L517 738.4L518 737.1L519 734.8L521 735.5L522 738.3L524 737.1L526 737.3L528 735.9L529 734.4L530 726.7L532 737.5L533 738.8L534 735.8L535 735.8L536 736.2L538 736.3L539 735.5L541 737.0L542 735.9L544 739.2L546 735.6L548 733.7L549 737.7L550 738.2L552 736.1L554 733.0L555 734.0L556 735.8L558 733.8L560 733.0L562 734.1L564 730.9L566 732.5L567 735.7L569 732.3L571 733.6L573 735.5L575 731.9L577 728.9L579 736.1L581 732.1L582 733.6L584 732.9L586 733.9L587 733.9L589 736.4L591 733.4L593 735.5L594 737.5L596 733.6L598 737.7L599 727.2L600 737.2L602 735.3L604 731.0L606 735.6L608 736.8L610 733.8L611 729.1L613 734.3L615 733.4L616 731.1L617 736.3L618 736.2L620 735.1L622 727.1L624 736.2L626 731.2L627 729.3L629 734.7L631 732.9L633 736.0L635 734.3L637 736.5L639 736.2L641 735.0L643 734.9L644 737.6L646 736.0L648 739.6L650 736.9L652 738.1L654 736.7L655 739.6L656 739.6L658 738.1L660 738.3L661 740.0L663 736.1L665 733.1L666 739.3L667 738.5L669 736.6L671 731.7L673 735.5L674 736.2L675 735.1L677 737.5L679 735.6L680 732.5L682 734.5L684 736.7L685 736.2L687 735.7L689 737.5L690 734.7L692 738.9L693 737.5L694 735.0L696 730.3L698 737.6L700 739.6L702 736.4L704 731.2L706 737.5L708 739.7L710 736.1L711 739.8L712 739.8L714 739.3L716 734.0L718 738.4L719 736.8L721 735.2L723 737.4L725 737.9L727 726.9L728 735.8L730 731.1L732 730.0L734 736.9L736 733.9L738 736.0L740 734.6L741 734.1L743 736.2L745 732.1L747 730.9L749 735.5L751 735.9L753 733.7L754 732.7L756 734.2L758 735.2L759 734.3L761 734.9L762 734.2L764 735.4L766 736.2L767 736.3L768 735.6L770 736.6L772 728.2L773 736.0L774 734.7L775 736.7L777 737.1L779 733.9L781 736.6L783 728.8L785 729.1L786 732.0L788 731.0L790 732.0L792 733.1L794 735.6L796 733.6L798 734.2L800 732.2L802 732.6L804 733.1L806 734.2L808 733.5L810 736.5L811 734.1L812 736.5L813 734.4L815 737.9L816 731.2L817 735.6L819 736.5L820 738.2L821 738.8L823 731.8L825 738.6L826 736.1L828 739.1L830 739.1L831 738.0L833 735.9L835 738.8L837 735.1L838 739.6L840 739.2L842 738.2L844 740.0L845 740.3L846 741.6L848 740.4L849 742.4L851 743.3L852 743.7L853 744.300Z" fill="#4a88f6"/></svg>
    <div class="t" style="left:115px;top:629.500px;font-size:16.500px;color:#fff;letter-spacing:-0.060px">Sony.4K.DEMO.[索尼4K演示片].12Bit.HEVC.mkv</div>
    <!-- filter clip -->
    <div class="abs" style="left:108px;top:750px;width:769px;height:49px;background:#53385f;border:2.500px solid #353d5c"></div>
    <div class="abs" style="left:112px;top:754px;width:34px;height:41px;background:#cbc3d3"></div>
    <svg style="left:112px;top:754px" width="34" height="41" viewBox="0 0 34 41" fill="#3f5aa8">
      <path d="M3 35L21 17.500L24 20.500L6 38Z" stroke="#3f5aa8" stroke-width="1.500" stroke-linejoin="round"/>
      <path d="M20 6.500l1.200 1.800l1.800 1.200l-1.800 1.200l-1.200 1.800l-1.200-1.800l-1.800-1.200l1.800-1.200ZM27.500 9l1 2l2 1l-2 1l-1 2l-1-2l-2-1l2-1ZM14 9.500l1 1.600l1.600 1l-1.600 1l-1 1.600l-1-1.600l-1.600-1l1.600-1ZM11.500 16.500l1 1.500l1.500 1l-1.500 1l-1 1.500l-1-1.500l-1.500-1l1.500-1ZM30.500 16l.8 1.400l1.400 .800l-1.400 .800l-.8 1.400l-.8-1.400l-1.400-.8l1.400-.8ZM28.500 22l1 1.600l1.600 1l-1.600 1l-1 1.600l-1-1.600l-1.600-1l1.600-1ZM22 26l.8 1.400l1.400 .800l-1.400 .800l-.8 1.400l-.8-1.400l-1.400-.8l1.400-.8Z"/>
    </svg>
    <div class="t" style="left:152px;top:768px;font-size:16.300px;color:#5b9fe6">风景-夏日</div>
    <!-- text clip -->
    <div class="abs" style="left:108px;top:875.700px;width:769px;height:50.200px;background:#3a4362;border:2.500px solid #363f5d"></div>
    <div class="abs" style="left:112px;top:880px;width:34px;height:41px;background:#c5cad6"></div>
    <svg style="left:112px;top:880px" width="34" height="41" viewBox="0 0 34 41" fill="none" stroke="#3f5aa8" stroke-width="3.800" stroke-linecap="round" stroke-linejoin="round">
      <path d="M6.900 14.500V11.500H27.100V14.500M17.300 11.500V33"/>
    </svg>
    <div class="t" style="left:152px;top:892.500px;font-size:17.300px;color:#5b9fe6">423Down.com</div>
    <!-- audio clip -->
    <div class="abs" style="left:108px;top:982.800px;width:769px;height:30px;background:#2b3044;border:2.500px solid #343d5a"></div>
    <div class="abs" style="left:108px;top:983px;width:769px;height:22px;overflow:hidden"><div class="t" style="left:7px;top:17.500px;font-size:16px;color:#5b9fe6">欧特斯更盛事四琴瑟</div></div>
    <!-- headers -->
    <svg style="left:0;top:623px" width="108" height="400" viewBox="0 623 108 400" fill="none" stroke="#c2c2c2" stroke-width="1.400" stroke-linecap="round" stroke-linejoin="round">
      <!-- video icon -->
      <path d="M14 674H36"/><rect x="11.700" y="677.500" width="26.600" height="19" rx="3"/><path d="M20.500 682.500V691.500a.8 .8 0 0 0 1.200 .700L29 687.700a.8 .8 0 0 0 0-1.400L21.700 681.800a.8 .8 0 0 0 -1.200 .700Z"/>
      <!-- filter icon -->
      <circle cx="24.500" cy="770" r="7"/><path d="M17.600 771.500A7 7 0 1 0 24.500 783M31.400 771.500A7 7 0 1 1 24.500 783M24.500 783V777.500a3.500 3.500 0 0 0 -3 1.500M24.500 777.500a3.500 3.500 0 0 1 3 1.500"/>
      <!-- pip icon -->
      <path d="M22 848.500H14a2.500 2.500 0 0 1 -2.500-2.500V829.500a2.500 2.500 0 0 1 2.500-2.500H34.500a2.500 2.500 0 0 1 2.500 2.500V836"/><rect x="24.500" y="838.500" width="13" height="10" rx="2.500"/>
      <!-- audio icon (cut) -->
      <path d="M19.500 1006V997.500L35.500 996V1006"/>
    </svg>
    <svg style="left:13px;top:888.500px" width="23.500" height="24"><use href="#ticon" width="23.500" height="24"/></svg>
    <svg style="left:13px;top:942.500px" width="23.500" height="24"><use href="#ticon" width="23.500" height="24"/></svg>
    <div class="t hl" style="left:44px;top:679px">视频</div>
    <div class="t hl" style="left:44px;top:768px">滤镜</div>
    <div class="t hl" style="left:44px;top:830.500px">画中画</div>
    <div class="t hl" style="left:44px;top:894px">文字</div>
    <div class="t hl" style="left:44px;top:948.500px">文字</div>
    <div class="abs" style="left:44px;top:1000px;width:40px;height:5px;overflow:hidden"><div class="t hl" style="left:0;top:0">音频</div></div>
    <!-- small icons -->
    <svg style="left:93px;top:662.500px" width="13" height="11"><use href="#spk" width="13" height="11"/></svg>
    <svg style="left:94px;top:679px" width="11" height="13"><use href="#lck" width="11" height="13"/></svg>
    <svg style="left:93px;top:699px" width="13" height="8"><use href="#eye" width="13" height="8"/></svg>
    <svg style="left:94px;top:759.500px" width="11" height="13"><use href="#lck" width="11" height="13"/></svg>
    <svg style="left:93px;top:780.500px" width="13" height="8"><use href="#eye" width="13" height="8"/></svg>
    <svg style="left:93px;top:815px" width="13" height="11"><use href="#spk" width="13" height="11"/></svg>
    <svg style="left:94px;top:831.500px" width="11" height="13"><use href="#lck" width="11" height="13"/></svg>
    <svg style="left:93px;top:852.500px" width="13" height="8"><use href="#eye" width="13" height="8"/></svg>
    <svg style="left:94px;top:886px" width="11" height="13"><use href="#lck" width="11" height="13"/></svg>
    <svg style="left:93px;top:907px" width="13" height="8"><use href="#eye" width="13" height="8"/></svg>
    <svg style="left:94px;top:939.500px" width="11" height="13"><use href="#lck" width="11" height="13"/></svg>
    <svg style="left:93px;top:960.500px" width="13" height="8"><use href="#eye" width="13" height="8"/></svg>
    <svg style="left:93px;top:993.500px" width="13" height="11"><use href="#spk" width="13" height="11"/></svg>
    <!-- bottom cover + scrollbar -->
    <div class="abs" style="left:0;top:1005px;width:1920px;height:25px;background:#1f1f1f"></div>
    <svg style="left:100px;top:1005px" width="400" height="20" viewBox="100 1005 400 20"><path d="M115.500 1013L123 1008.500V1017.500Z" fill="#5a5a5a"/><rect x="129" y="1009" width="303" height="8.500" rx="4.250" fill="#7a6a2c"/></svg>
    <!-- playhead -->
    <div class="abs" style="left:432px;top:612px;width:1.300px;height:393px;background:#f3d04e"></div>
    <svg style="left:420px;top:598px" width="26" height="24" viewBox="420 598 26 24"><path d="M426.500 602a1.200 1.200 0 0 1 1.200-1.200h10a1.200 1.200 0 0 1 1.200 1.200V614.500L435 618.800H430.400L426.500 614.500Z" fill="#f6d24e"/></svg>
    <div class="abs" style="left:423px;top:869px;width:18.500px;height:32px;border-radius:9px;background:#3d3d3d"></div>
    <svg style="left:423px;top:869px" width="18.500" height="32" viewBox="0 0 18.500 32" fill="none" stroke="#8a8a8a" stroke-width="1.100" stroke-linecap="round"><path d="M7 9L11.500 19.500M11.500 9L7 19.500"/><circle cx="6" cy="21.500" r="2.200"/><circle cx="12.500" cy="21.500" r="2.200"/></svg>
    <!-- v scrollbar -->
    <svg style="left:1896px;top:625px" width="20" height="280" viewBox="1896 625 20 280"><path d="M1901 635.700L1905 628.300L1909 635.700Z" fill="#6a6a6a"/><rect x="1901.300" y="642" width="7.700" height="254" rx="3.850" fill="#bba23a"/></svg>
    <!-- watermark -->
    <div class="t" style="left:1812px;top:970px;font-size:27px;font-weight:bold;font-style:italic;color:#1f2d68;-webkit-text-stroke:1px #1f2d68;transform:scaleX(2.300);transform-origin:0 0">4</div>
    <div class="t" style="left:1853px;top:972px;font-size:16.500px;font-weight:bold;font-style:italic;color:#1f2d68;-webkit-text-stroke:0.800px #1f2d68;transform:scaleX(3.050);transform-origin:0 0">23</div>
    <div class="t" style="left:1856px;top:986.500px;font-size:8.500px;font-weight:bold;font-style:italic;color:#1f2d68;-webkit-text-stroke:0.600px #1f2d68;transform:scaleX(1.900);transform-origin:0 0">DOWN</div>
    <div class="t" style="left:1818px;top:993px;font-size:24px;font-weight:bold;color:#060606;transform:scaleX(0.620);transform-origin:0 0">423down.com</div>
    <div class="t" style="left:1666.500px;top:992px;font-size:23.500px;font-weight:bold;font-style:italic;color:#581a1e;-webkit-text-stroke:0.500px #581a1e;letter-spacing:-0.250px">www.ligonggong.com</div>
  </div>
</div>
</body>
</html>
